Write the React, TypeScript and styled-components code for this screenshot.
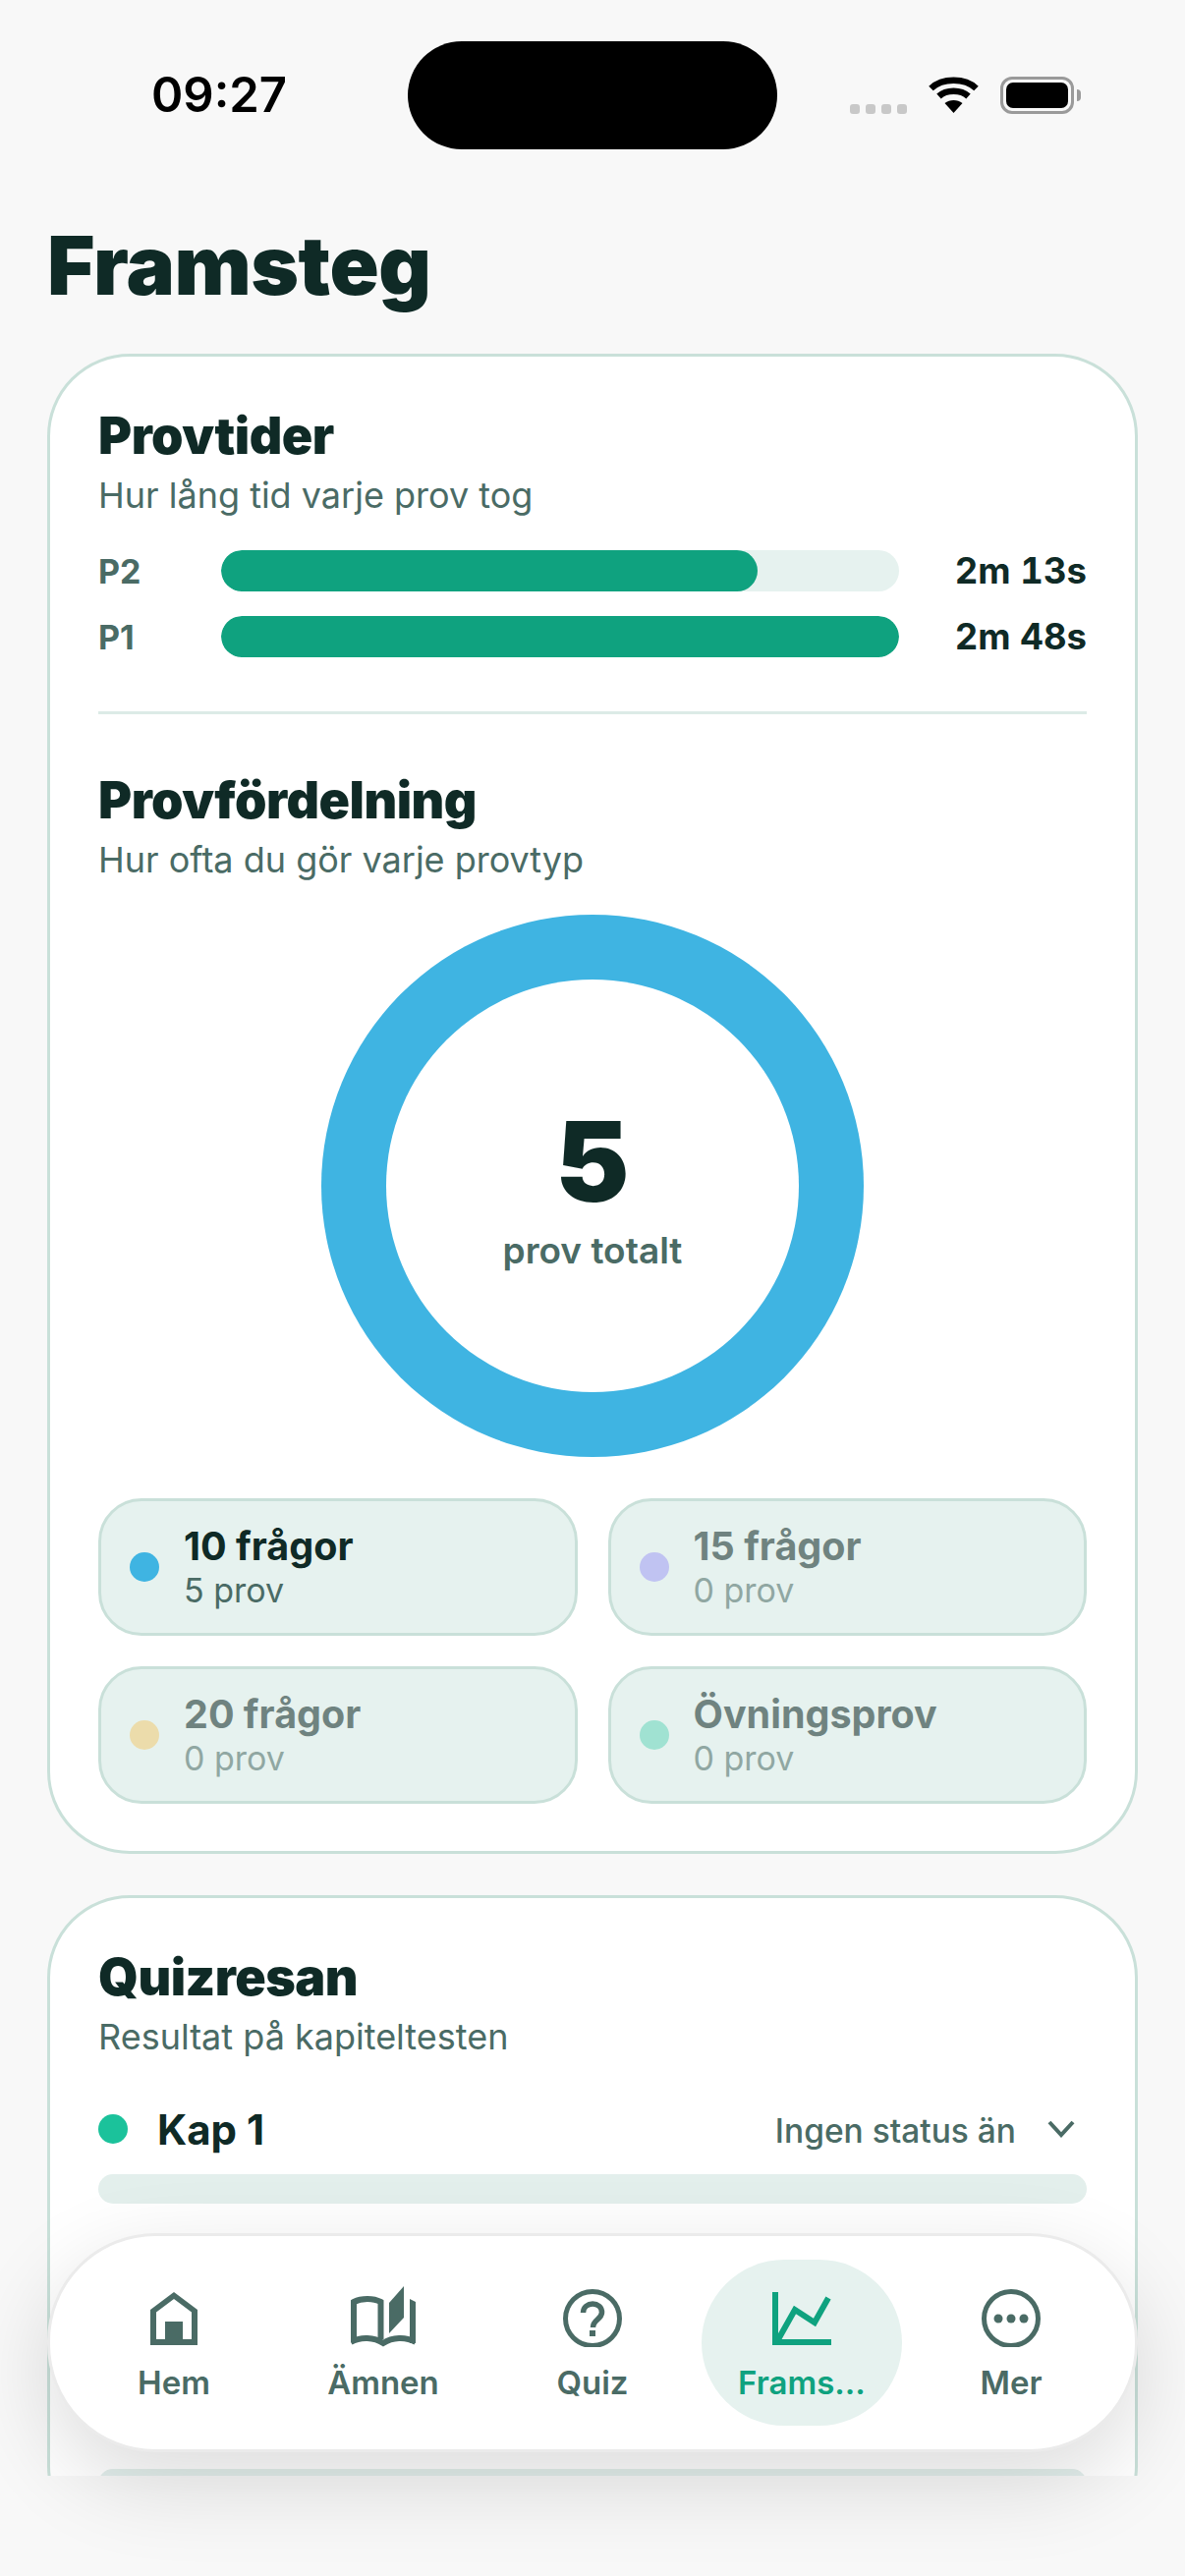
import styled, { createGlobalStyle } from "styled-components";

const ink = "#0f2a26";
const muted = "#4a6b65";
const green = "#0fa27f";
const pale = "#e6f2ef";
const line = "#c9e0d9";

const GlobalStyle = createGlobalStyle`
  html, body {
    margin: 0;
    padding: 0;
    background: #f8f8f8;
  }
  body {
    font-family: Inter, "Liberation Sans", sans-serif;
    color: ${ink};
  }
`;

const bars = [
  { label: "P2", value: "2m 13s", seconds: 133 },
  { label: "P1", value: "2m 48s", seconds: 168 },
];

const legend = [
  { title: "10 frågor", count: "5 prov", color: "#3fb4e2", empty: false },
  { title: "15 frågor", count: "0 prov", color: "#c0c3f2", empty: true },
  { title: "20 frågor", count: "0 prov", color: "#ecdcab", empty: true },
  { title: "Övningsprov", count: "0 prov", color: "#a0e2d2", empty: true },
];

const HomeIcon = () => (
  <svg width="48" height="62" viewBox="0 -6 48 62">
    <path
      fillRule="evenodd"
      fill="currentColor"
      d="M24 0 L48 18 V54 H0 V18 Z M24 7 L6 20.500 V48 H15 V30 H33 V48 H42 V20.500 Z"
    />
  </svg>
);

const BookIcon = () => (
  <svg width="66" height="62" viewBox="0 0 66 62">
    <path
      fill="none"
      stroke="currentColor"
      strokeWidth="6"
      d="M3 57 V16 C11 12 23 12 30.500 16 V54"
    />
    <path fill="none" stroke="currentColor" strokeWidth="6" d="M0 57 C10 51 24 52 33 58 C42 52 56 51 66 57" />
    <path fill="currentColor" d="M39 17 L54 0 V32 L39 48 Z" />
    <path fill="currentColor" d="M60 13 L66 16 V58 H60 Z" />
  </svg>
);

const QuizIcon = () => (
  <svg width="60" height="62" viewBox="0 -3 60 62">
    <circle cx="30" cy="30" r="27.500" fill="none" stroke="currentColor" strokeWidth="5" />
    <path
      fill="none"
      stroke="currentColor"
      strokeWidth="5.500"
      d="M20.500 24 C20.500 12 40 12 39.500 24 C39 31 30.500 31 30.500 39"
    />
    <rect x="27" y="42" width="6" height="6" fill="currentColor" />
  </svg>
);

const ChartIcon = () => (
  <svg width="60" height="62" viewBox="0 -6 60 62">
    <path fill="currentColor" d="M0 0 H6 V48 H60 V54 H0 Z" />
    <path fill="none" stroke="currentColor" strokeWidth="6" d="M5 50 L23 18 L43 31 L57 6" />
  </svg>
);

const MoreIcon = () => (
  <svg width="60" height="62" viewBox="0 -3 60 62">
    <circle cx="30" cy="30" r="27.500" fill="none" stroke="currentColor" strokeWidth="5" />
    <circle cx="17" cy="30" r="4.500" fill="currentColor" />
    <circle cx="30" cy="30" r="4.500" fill="currentColor" />
    <circle cx="43" cy="30" r="4.500" fill="currentColor" />
  </svg>
);

const Chevron = () => (
  <svg width="28" height="18" viewBox="0 0 28 18">
    <path fill="none" stroke="currentColor" strokeWidth="4" d="M2 2 L14 15 L26 2" />
  </svg>
);

const WifiIcon = () => (
  <svg width="51" height="38" viewBox="0 0 51 38">
    <path
      fill="none"
      stroke="#000"
      strokeWidth="6.500"
      d="M2.500 12 C14 1 37 1 48.500 12 M10.500 20 C18 13 33 13 40.500 20"
    />
    <path fill="#000" d="M25.500 37 L16.500 27 C21.500 23 29.500 23 34.500 27 Z" />
  </svg>
);

const navItems = [
  { label: "Hem", icon: <HomeIcon /> },
  { label: "Ämnen", icon: <BookIcon /> },
  { label: "Quiz", icon: <QuizIcon /> },
  { label: "Frams...", icon: <ChartIcon />, active: true },
  { label: "Mer", icon: <MoreIcon /> },
];

export default function App() {
  const longest = Math.max(...bars.map((b) => b.seconds));

  return (
    <Screen>
      <GlobalStyle />
      <Scroll>
        <StatusBar>
          <Clock>09:27</Clock>
          <Island />
          <StatusIcons>
            <Signal>
              <i />
              <i />
              <i />
              <i />
            </Signal>
            <WifiIcon />
            <Battery>
              <BatteryFill />
            </Battery>
          </StatusIcons>
        </StatusBar>

        <PageTitle>Framsteg</PageTitle>

        <Card>
          <CardTitle>Provtider</CardTitle>
          <CardSub>Hur lång tid varje prov tog</CardSub>
          <BarList>
            {bars.map((bar) => (
              <BarRow key={bar.label}>
                <BarLabel>{bar.label}</BarLabel>
                <BarTrack>
                  <BarFill style={{ width: `${(bar.seconds / longest) * 100}%` }} />
                </BarTrack>
                <BarValue>{bar.value}</BarValue>
              </BarRow>
            ))}
          </BarList>

          <Divider />

          <CardTitle>Provfördelning</CardTitle>
          <CardSub>Hur ofta du gör varje provtyp</CardSub>
          <Donut>
            <DonutHole>
              <DonutNumber>5</DonutNumber>
              <DonutCaption>prov totalt</DonutCaption>
            </DonutHole>
          </Donut>
          <LegendGrid>
            {legend.map((item) => (
              <LegendChip key={item.title}>
                <Dot $color={item.color} />
                <LegendText $empty={item.empty}>
                  <LegendTitle>{item.title}</LegendTitle>
                  <LegendCount>{item.count}</LegendCount>
                </LegendText>
              </LegendChip>
            ))}
          </LegendGrid>
        </Card>

        <Card>
          <CardTitle>Quizresan</CardTitle>
          <CardSub>Resultat på kapiteltesten</CardSub>
          <ChapterRow>
            <ChapterDot />
            <ChapterName>Kap 1</ChapterName>
            <ChapterStatus>Ingen status än</ChapterStatus>
            <ChevronSlot>
              <Chevron />
            </ChevronSlot>
          </ChapterRow>
          <ChapterBar />
          <NextBar />
        </Card>
      </Scroll>

      <TabBar>
        {navItems.map((item) => (
          <Tab key={item.label} $active={item.active}>
            <TabIcon>{item.icon}</TabIcon>
            <TabLabel>{item.label}</TabLabel>
          </Tab>
        ))}
      </TabBar>
    </Screen>
  );
}

const Screen = styled.div`
  position: relative;
  width: 1206px;
  height: 2622px;
  overflow: hidden;
  background: #f8f8f8;
`;

const Scroll = styled.div`
  height: 2520px;
  overflow: hidden;
  padding: 0 48px;
  box-sizing: border-box;
`;

const StatusBar = styled.div`
  height: 194px;
  padding: 42px 113px 0 154px;
  box-sizing: border-box;
  display: flex;
  align-items: flex-start;
  margin: 0 -48px;
`;

const Clock = styled.div`
  width: 261px;
  height: 110px;
  line-height: 110px;
  font-size: 49px;
  font-weight: 600;
  color: #000;
`;

const Island = styled.div`
  width: 376px;
  height: 110px;
  border-radius: 55px;
  background: #000;
`;

const StatusIcons = styled.div`
  flex: 1;
  height: 110px;
  display: flex;
  align-items: center;
  justify-content: flex-end;
  gap: 22px;
`;

const Signal = styled.div`
  display: flex;
  gap: 6px;
  margin-top: 28px;

  i {
    display: block;
    width: 10px;
    height: 10px;
    border-radius: 3px;
    background: #c8c8c8;
  }
`;

const Battery = styled.div`
  position: relative;
  width: 75px;
  height: 38px;
  box-sizing: border-box;
  border: 3px solid #9a9a9a;
  border-radius: 12px;
  padding: 3px;

  &::after {
    content: "";
    position: absolute;
    right: -10px;
    top: 10px;
    width: 4px;
    height: 12px;
    border-radius: 0 4px 4px 0;
    background: #9a9a9a;
  }
`;

const BatteryFill = styled.div`
  height: 100%;
  border-radius: 7px;
  background: #000;
`;

const PageTitle = styled.h1`
  margin: 0;
  height: 166px;
  font-size: 83px;
  line-height: 152px;
  font-weight: 900;
  letter-spacing: -0.500px;
  color: ${ink};
`;

const Card = styled.section`
  background: #fff;
  border: 3px solid ${line};
  border-radius: 84px;
  padding: 48px 49px;
  margin-bottom: 42px;
  width: 1110px;
  box-sizing: border-box;
`;

const CardTitle = styled.h2`
  margin: 0;
  font-size: 52px;
  line-height: 66px;
  font-weight: 900;
  letter-spacing: -0.500px;
  color: ${ink};
`;

const CardSub = styled.p`
  margin: 3px 0 0;
  font-size: 36px;
  line-height: 48px;
  color: ${muted};
`;

const BarList = styled.div`
  display: flex;
  flex-direction: column;
  gap: 25px;
  margin-top: 32px;
`;

const BarRow = styled.div`
  display: flex;
  align-items: center;
  height: 42px;
`;

const BarLabel = styled.div`
  width: 125px;
  font-size: 34px;
  font-weight: 700;
  color: ${muted};
`;

const BarTrack = styled.div`
  width: 690px;
  height: 42px;
  border-radius: 21px;
  background: ${pale};
  overflow: hidden;
`;

const BarFill = styled.div`
  height: 100%;
  border-radius: 21px;
  background: ${green};
`;

const BarValue = styled.div`
  flex: 1;
  text-align: right;
  font-size: 36.500px;
  font-weight: 700;
  font-variant-numeric: tabular-nums;
  color: ${ink};
`;

const Divider = styled.div`
  height: 3px;
  background: #dcebe7;
  margin: 55px 0 55px;
`;

const Donut = styled.div`
  width: 552px;
  height: 552px;
  margin: 32px auto 0;
  border-radius: 50%;
  background: #3fb4e2;
  display: flex;
  align-items: center;
  justify-content: center;
`;

const DonutHole = styled.div`
  width: 420px;
  height: 420px;
  border-radius: 50%;
  background: #fff;
  display: flex;
  flex-direction: column;
  align-items: center;
  justify-content: center;
`;

const DonutNumber = styled.div`
  font-size: 113px;
  line-height: 124px;
  font-weight: 900;
  color: ${ink};
  margin-top: 2px;
`;

const DonutCaption = styled.div`
  font-size: 37px;
  line-height: 46px;
  font-weight: 600;
  color: ${muted};
  margin-top: 6px;
`;

const LegendGrid = styled.div`
  display: grid;
  grid-template-columns: 1fr 1fr;
  gap: 31px;
  margin-top: 42px;
`;

const LegendChip = styled.div`
  height: 140px;
  box-sizing: border-box;
  display: flex;
  align-items: center;
  gap: 25px;
  padding: 0 29px;
  background: ${pale};
  border: 3px solid ${line};
  border-radius: 44px;
`;

const Dot = styled.div<{ $color: string }>`
  width: 30px;
  height: 30px;
  border-radius: 50%;
  flex: none;
  background: ${(p) => p.$color};
`;

const LegendText = styled.div<{ $empty: boolean }>`
  opacity: ${(p) => (p.$empty ? 0.55 : 1)};
`;

const LegendTitle = styled.div`
  font-size: 39.500px;
  line-height: 46px;
  font-weight: 700;
  color: ${ink};
`;

const LegendCount = styled.div`
  font-size: 34px;
  line-height: 40px;
  margin-top: 2px;
  color: ${muted};
`;

const ChapterRow = styled.div`
  display: flex;
  align-items: center;
  height: 50px;
  margin-top: 45px;
`;

const ChapterDot = styled.div`
  width: 30px;
  height: 30px;
  border-radius: 50%;
  background: #1bc29b;
  margin-right: 30px;
`;

const ChapterName = styled.div`
  flex: 1;
  font-size: 42px;
  font-weight: 700;
  color: ${ink};
`;

const ChapterStatus = styled.div`
  font-size: 33.500px;
  font-weight: 500;
  color: ${muted};
  margin-top: 3px;
`;

const ChevronSlot = styled.div`
  color: ${muted};
  display: flex;
  margin: 0 12px 0 32px;
`;

const ChapterBar = styled.div`
  height: 30px;
  border-radius: 15px;
  background: #e3efec;
  margin-top: 21px;
`;

const NextBar = styled(ChapterBar)`
  margin-top: 270px;
`;

const TabBar = styled.nav`
  position: absolute;
  left: 48px;
  top: 2273px;
  width: 1110px;
  height: 223px;
  box-sizing: border-box;
  padding: 24px;
  display: grid;
  grid-template-columns: repeat(5, 1fr);
  gap: 9px;
  background: #fff;
  border: 3px solid #ebebeb;
  border-radius: 110px;
  box-shadow: 0 30px 90px rgba(0, 0, 0, 0.14);
`;

const Tab = styled.div<{ $active?: boolean }>`
  display: flex;
  flex-direction: column;
  align-items: center;
  border-radius: 85px;
  padding-top: 27px;
  color: ${(p) => (p.$active ? green : muted)};
  background: ${(p) => (p.$active ? pale : "transparent")};
`;

const TabIcon = styled.div`
  height: 62px;
  display: flex;
`;

const TabLabel = styled.div`
  font-size: 33px;
  line-height: 40px;
  font-weight: 600;
  margin-top: 16px;
`;
